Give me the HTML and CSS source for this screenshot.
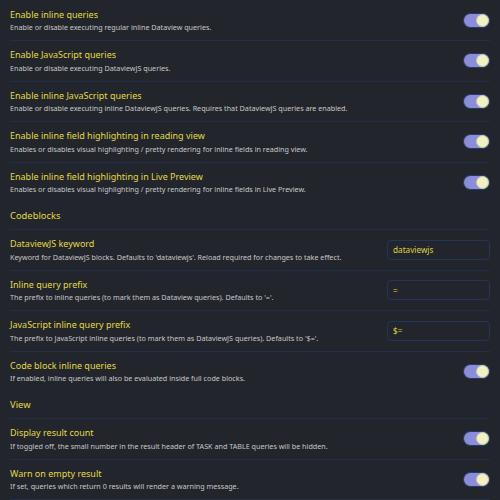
FILE: index.html
```html
<!DOCTYPE html>
<html>
<head>
<meta charset="utf-8">
<link rel="stylesheet" href="styles.css">
</head>
<body>
<div class="settings">
  <div class="item first">
    <div class="info"><div class="name">Enable inline queries</div><div class="desc">Enable or disable executing regular inline Dataview queries.</div></div>
    <div class="control"><div class="toggle on"><span class="knob"></span></div></div>
  </div>
  <div class="item">
    <div class="info"><div class="name">Enable JavaScript queries</div><div class="desc">Enable or disable executing DataviewJS queries.</div></div>
    <div class="control"><div class="toggle on"><span class="knob"></span></div></div>
  </div>
  <div class="item">
    <div class="info"><div class="name">Enable inline JavaScript queries</div><div class="desc">Enable or disable executing inline DataviewJS queries. Requires that DataviewJS queries are enabled.</div></div>
    <div class="control"><div class="toggle on"><span class="knob"></span></div></div>
  </div>
  <div class="item">
    <div class="info"><div class="name">Enable inline field highlighting in reading view</div><div class="desc">Enables or disables visual highlighting / pretty rendering for inline fields in reading view.</div></div>
    <div class="control"><div class="toggle on"><span class="knob"></span></div></div>
  </div>
  <div class="item">
    <div class="info"><div class="name">Enable inline field highlighting in Live Preview</div><div class="desc">Enables or disables visual highlighting / pretty rendering for inline fields in Live Preview.</div></div>
    <div class="control"><div class="toggle on"><span class="knob"></span></div></div>
  </div>
  <div class="heading">Codeblocks</div>
  <div class="item">
    <div class="info"><div class="name">DataviewJS keyword</div><div class="desc">Keyword for DataviewJS blocks. Defaults to 'dataviewjs'. Reload required for changes to take effect.</div></div>
    <div class="control"><input class="text" type="text" value="dataviewjs"></div>
  </div>
  <div class="item">
    <div class="info"><div class="name">Inline query prefix</div><div class="desc">The prefix to inline queries (to mark them as Dataview queries). Defaults to '='.</div></div>
    <div class="control"><input class="text" type="text" value="="></div>
  </div>
  <div class="item">
    <div class="info"><div class="name">JavaScript inline query prefix</div><div class="desc">The prefix to JavaScript inline queries (to mark them as DataviewJS queries). Defaults to '$='.</div></div>
    <div class="control"><input class="text" type="text" value="$="></div>
  </div>
  <div class="item">
    <div class="info"><div class="name">Code block inline queries</div><div class="desc">If enabled, inline queries will also be evaluated inside full code blocks.</div></div>
    <div class="control"><div class="toggle on"><span class="knob"></span></div></div>
  </div>
  <div class="heading">View</div>
  <div class="item">
    <div class="info"><div class="name">Display result count</div><div class="desc">If toggled off, the small number in the result header of TASK and TABLE queries will be hidden.</div></div>
    <div class="control"><div class="toggle on"><span class="knob"></span></div></div>
  </div>
  <div class="item">
    <div class="info"><div class="name">Warn on empty result</div><div class="desc">If set, queries which return 0 results will render a warning message.</div></div>
    <div class="control"><div class="toggle on"><span class="knob"></span></div></div>
  </div>
  <div class="item empty"></div>
</div>
</body>
</html>
```
FILE: styles.css
```css
html, body {
  margin: 0;
  padding: 0;
  background: #22252c;
  height: 100%;
  overflow: hidden;
}
body {
  font-family: "Noto Sans", "Open Sans", sans-serif;
}
.settings {
  padding: 0 10px;
}
.item {
  display: flex;
  align-items: center;
  justify-content: space-between;
  border-top: 1px solid #232e4a;
  padding: 7px 0;
  min-height: 25.5px;
}
.item.first {
  border-top: none;
  padding-top: 7.5px;
}
.item.empty {
  min-height: 0;
  padding: 0;
}
.info {
  flex: 1;
  min-width: 0;
}
.name {
  color: #e3da45;
  font-size: 9px;
  line-height: 14px;
}
.desc {
  color: #c8c8c8;
  font-size: 7.2px;
  line-height: 11px;
  margin-top: 0.5px;
  white-space: nowrap;
}
.heading {
  color: #e3da45;
  font-size: 9.4px;
  line-height: 14px;
  padding: 7px 0 6px;
}
.control {
  flex: none;
  display: flex;
  align-items: center;
  margin-left: 10px;
}
.toggle {
  box-sizing: border-box;
  width: 27px;
  height: 15px;
  border-radius: 8px;
  background: #8b8dd9;
  border: 1px solid #243a6a;
  position: relative;
}
.knob {
  position: absolute;
  right: 0;
  top: 0;
  width: 13px;
  height: 13px;
  box-sizing: border-box;
  border-radius: 50%;
  background: #f2f1c6;
  border: 1px solid #c9c89c;
}
.text {
  box-sizing: border-box;
  width: 103px;
  height: 20px;
  background: #22252c;
  border: 1px solid #24345a;
  border-radius: 4px;
  color: #dcd444;
  font-family: "Noto Sans", sans-serif;
  font-size: 8.2px;
  padding: 0 5px;
  outline: none;
}
```
